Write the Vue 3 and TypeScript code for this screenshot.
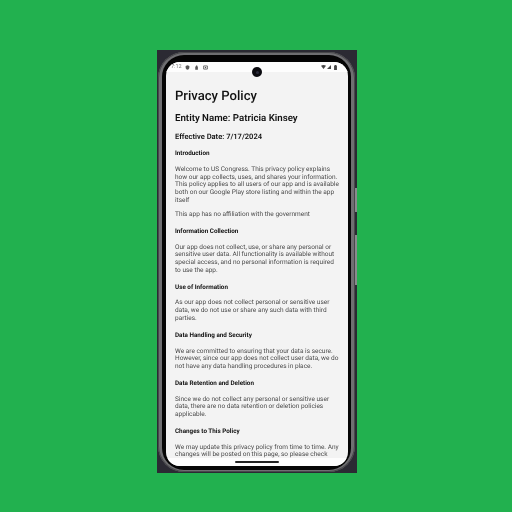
<script setup lang="ts">
interface Block { kind: 'h' | 'p'; text: string }
const blocks: Block[] = [
  { kind: 'h', text: 'Introduction' },
  { kind: 'p', text: 'Welcome to US Congress. This privacy policy explains how our app collects, uses, and shares your information. This policy applies to all users of our app and is available both on our Google Play store listing and within the app itself' },
  { kind: 'p', text: 'This app has no affiliation with the government' },
  { kind: 'h', text: 'Information Collection' },
  { kind: 'p', text: 'Our app does not collect, use, or share any personal or sensitive user data. All functionality is available without special access, and no personal information is required to use the app.' },
  { kind: 'h', text: 'Use of Information' },
  { kind: 'p', text: 'As our app does not collect personal or sensitive user data, we do not use or share any such data with third parties.' },
  { kind: 'h', text: 'Data Handling and Security' },
  { kind: 'p', text: 'We are committed to ensuring that your data is secure. However, since our app does not collect user data, we do not have any data handling procedures in place.' },
  { kind: 'h', text: 'Data Retention and Deletion' },
  { kind: 'p', text: 'Since we do not collect any personal or sensitive user data, there are no data retention or deletion policies applicable.' },
  { kind: 'h', text: 'Changes to This Policy' },
  { kind: 'p', text: 'We may update this privacy policy from time to time. Any changes will be posted on this page, so please check back regularly for updates.' },
]
</script>

<template>
  <main class="stage">
    <div class="case">
      <div class="rim">
        <div class="bezel">
          <div class="screen">
            <header class="status">
              <div class="status-left">
                <span class="time">7:12</span>
                <svg class="ic" viewBox="0 0 8 8"><path d="M4 .5 7 1.6v2.2C7 5.7 5.700 7 4 7.600 2.300 7 1 5.700 1 3.800V1.600z" fill="#555" /></svg>
                <svg class="ic" viewBox="0 0 8 8"><path d="M2 2.500h4.200v5H2zM3.200.6h2v1.900h-2z" fill="#555" /></svg>
                <svg class="ic" viewBox="0 0 8 8"><path d="M1 1.500h6v5H1z" fill="none" stroke="#555" stroke-width="1.300" /><path d="M3 3h2v2H3z" fill="#555" /></svg>
              </div>
              <div class="status-right">
                <svg class="sys wifi" viewBox="0 0 8 6"><path d="M0 .8C2.500-.3 5.500-.3 8 .8L4 6z" fill="#444" /></svg>
                <svg class="sys" viewBox="0 0 6 6"><path d="M6 0v6H0z" fill="#444" /></svg>
                <svg class="sys batt" viewBox="0 0 4 7"><path d="M1.200 0h1.600v.7H4V7H0V.7h1.200z" fill="#444" /></svg>
              </div>
              <span class="camera"><i></i></span>
            </header>
            <div class="content">
              <h1>Privacy Policy</h1>
              <h2>Entity Name: Patricia Kinsey</h2>
              <h3>Effective Date: 7/17/2024</h3>
              <template v-for="b in blocks" :key="b.text">
                <h4 v-if="b.kind === 'h'">{{ b.text }}</h4>
                <p v-else>{{ b.text }}</p>
              </template>
            </div>
            <footer class="gesture"><span></span></footer>
          </div>
        </div>
        <span class="btn power"></span>
        <span class="btn volume"></span>
      </div>
    </div>
  </main>
</template>

<style>
html, body { margin: 0; padding: 0; }
</style>

<style scoped>
.stage {
  width: 512px;
  height: 512px;
  background: #22b14f;
  display: flex;
  align-items: flex-start;
  justify-content: flex-start;
  padding: 50px 0 0 157px;
  box-sizing: border-box;
  overflow: hidden;
}
.case {
  width: 200px;
  height: 423px;
  background: #2b2a33;
  padding: 2px 2px 1px 1px;
  box-sizing: border-box;
}
.rim {
  position: relative;
  height: 100%;
  box-sizing: border-box;
  padding: 3px 4px 2px;
  border-radius: 26px;
  background: #6f6f72;
  box-shadow: inset 0 0 0 1px #48484b;
}
.bezel {
  height: 100%;
  box-sizing: border-box;
  padding: 7px 3px 4px 4px;
  border-radius: 22px;
  background: #050505;
}
.screen {
  position: relative;
  height: 100%;
  border-radius: 14px;
  overflow: hidden;
  background: #f3f3f3;
  display: flex;
  flex-direction: column;
  font-family: Roboto, "Liberation Sans", sans-serif;
  text-rendering: geometricPrecision;
}
.status {
  flex: none;
  height: 10px;
  padding: 1px 11px 0 5px;
  box-sizing: border-box;
  background: #fdfdfd;
  display: flex;
  align-items: flex-start;
  justify-content: space-between;
}
.status-left, .status-right { display: flex; align-items: center; height: 8px; filter: blur(0.3px); }
.status-left { gap: 4px; }
.status-right { gap: 1px; }
.time { font-size: 5.500px; color: #777; width: 10px; }
.ic { width: 5px; height: 5px; }
.sys { width: 4px; height: 4px; }
.wifi { width: 5px; }
.batt { width: 3px; height: 5px; margin-left: 2px; }
.camera {
  position: absolute;
  left: 50%;
  top: 5px;
  width: 10px;
  height: 10px;
  margin-left: -5px;
  border-radius: 50%;
  background: #0a0a0f;
  display: flex;
  align-items: center;
  justify-content: center;
}
.camera i { width: 3px; height: 3px; border-radius: 50%; background: #2a2a3a; }
.content {
  flex: 1;
  min-height: 0;
  overflow: hidden;
  padding: 17px 8px 0 9px;
  color: #111;
  filter: blur(0.3px);
}
h1 { margin: 0 0 8px; font-size: 13.100px; line-height: 16px; font-weight: 500; }
h2 { margin: 0 0 7px; font-size: 9.700px; line-height: 12px; font-weight: 600; }
h3 { margin: 0 0 -0.800px; font-size: 7.550px; line-height: 10px; font-weight: 600; }
h4 { margin: 8.100px 0 8.600px; font-size: 6.300px; line-height: 8px; font-weight: 700; }
p { margin: 0 0 6.200px; font-size: 6.500px; line-height: 7.800px; color: #4a4a4a; font-weight: 400; }
.gesture {
  position: absolute;
  left: 0;
  right: 0;
  bottom: 0;
  height: 8px;
  background: #fdfdfd;
  display: flex;
  justify-content: center;
  padding-top: 3px;
  box-sizing: border-box;
}
.gesture span { width: 44px; height: 1.500px; background: #222; border-radius: 1px; }
.btn { position: absolute; right: -2px; width: 2px; background: #8a8a8d; }
.power { top: 136px; height: 24px; }
.volume { top: 183px; height: 50px; }
</style>
